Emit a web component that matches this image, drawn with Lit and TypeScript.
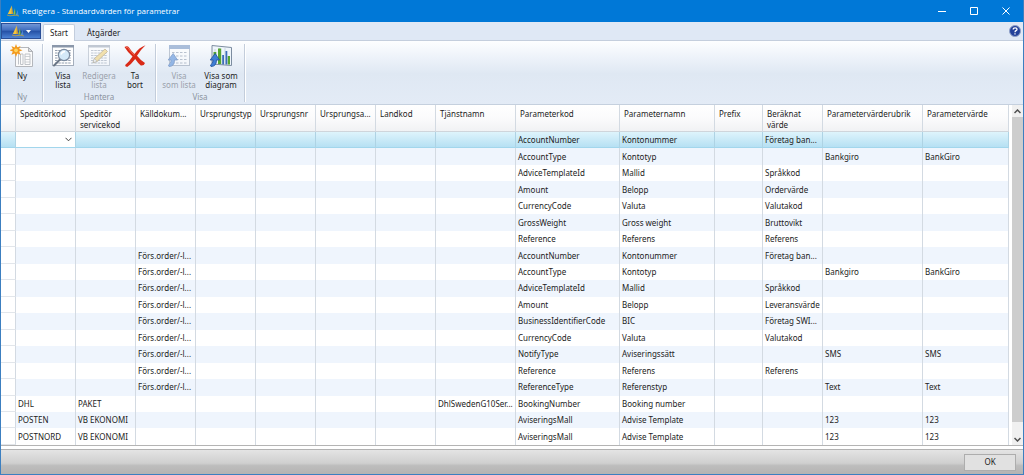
import { LitElement, html, css, svg } from 'lit';
import { customElement, state } from 'lit/decorators.js';
import { classMap } from 'lit/directives/class-map.js';

interface Column {
  key: string;
  title: string;
  width: number;
}

type Row = Record<string, string>;

const columns: Column[] = [
  { key: 'agent', title: 'Speditörkod', width: 60 },
  { key: 'service', title: 'Speditör servicekod', width: 60 },
  { key: 'source', title: 'Källdokum...', width: 60 },
  { key: 'originType', title: 'Ursprungstyp', width: 60 },
  { key: 'originNo', title: 'Ursprungsnr', width: 60 },
  { key: 'originAddress', title: 'Ursprungsa...', width: 60 },
  { key: 'country', title: 'Landkod', width: 60 },
  { key: 'serviceName', title: 'Tjänstnamn', width: 80 },
  { key: 'code', title: 'Parameterkod', width: 104 },
  { key: 'name', title: 'Parameternamn', width: 95 },
  { key: 'prefix', title: 'Prefix', width: 48 },
  { key: 'computed', title: 'Beräknat värde', width: 60 },
  { key: 'heading', title: 'Parametervärderubrik', width: 100 },
  { key: 'value', title: 'Parametervärde', width: 86 },
];

const order = 'Förs.order/-l...';

const rows: Row[] = [
  { code: 'AccountNumber', name: 'Kontonummer', computed: 'Företag ban...' },
  { code: 'AccountType', name: 'Kontotyp', heading: 'Bankgiro', value: 'BankGiro' },
  { code: 'AdviceTemplateId', name: 'Mallid', computed: 'Språkkod' },
  { code: 'Amount', name: 'Belopp', computed: 'Ordervärde' },
  { code: 'CurrencyCode', name: 'Valuta', computed: 'Valutakod' },
  { code: 'GrossWeight', name: 'Gross weight', computed: 'Bruttovikt' },
  { code: 'Reference', name: 'Referens', computed: 'Referens' },
  { source: order, code: 'AccountNumber', name: 'Kontonummer', computed: 'Företag ban...' },
  { source: order, code: 'AccountType', name: 'Kontotyp', heading: 'Bankgiro', value: 'BankGiro' },
  { source: order, code: 'AdviceTemplateId', name: 'Mallid', computed: 'Språkkod' },
  { source: order, code: 'Amount', name: 'Belopp', computed: 'Leveransvärde' },
  { source: order, code: 'BusinessIdentifierCode', name: 'BIC', computed: 'Företag SWI...' },
  { source: order, code: 'CurrencyCode', name: 'Valuta', computed: 'Valutakod' },
  { source: order, code: 'NotifyType', name: 'Aviseringssätt', heading: 'SMS', value: 'SMS' },
  { source: order, code: 'Reference', name: 'Referens', computed: 'Referens' },
  { source: order, code: 'ReferenceType', name: 'Referenstyp', heading: 'Text', value: 'Text' },
  { agent: 'DHL', service: 'PAKET', serviceName: 'DhlSwedenG10Ser...', code: 'BookingNumber', name: 'Booking number' },
  { agent: 'POSTEN', service: 'VB EKONOMI', code: 'AviseringsMall', name: 'Advise Template', heading: '123', value: '123' },
  { agent: 'POSTNORD', service: 'VB EKONOMI', code: 'AviseringsMall', name: 'Advise Template', heading: '123', value: '123' },
];

const logo = html`<svg class="logo" viewBox="0 0 12 12" aria-hidden="true">
  <path d="M4.800 0.500v8.500H0.800z" fill="#f5c53a" />
  <path d="M4.800 0.500l1.400 8.500H4.800z" fill="#dd9a22" />
  <path d="M8 3v6.500H6.300z" fill="#8cc152" />
  <path d="M8 3l1 6.500h-1z" fill="#4c9440" />
  <path d="M10.600 5v5H9.300z" fill="#7db4e8" />
  <path d="M10.600 5l1 5h-1z" fill="#3b77c4" />
  <path d="M0 10q3 1.400 6 .5t6 .5" fill="none" stroke="#c9a63c" stroke-width="0.8" />
</svg>`;

const sheet = svg`
  <rect x="1.500" y="1.500" width="21" height="20" fill="#fff" stroke="#a4aebc" />
  <rect x="1" y="1" width="22" height="2.500" fill="#8a97aa" />
  <path d="M4 6.500h16M4 9h16M4 11.500h16M4 14h16M4 16.500h16M4 19h16" stroke="#8793a5" stroke-width="0.900" stroke-dasharray="2.5 .8" />`;

const arrow = svg`
  <path d="M2 22.500q5.500 0 5.500-6.500H10.500L6.200 9.500 1.200 16H4.200q0 3.500-2.700 5z" fill="#3f7fd6" stroke="#1d4f9c" stroke-width="0.8" />`;

const icons = {
  create: html`<svg class="icon" viewBox="0 0 24 24" aria-hidden="true">
    <path d="M5.500 3.500h13l4 4v15h-17z" fill="#fbfbfb" stroke="#b4b7bc" />
    <path d="M18.500 3.500v4h4z" fill="#dcdfe3" stroke="#a3a6ab" stroke-width="0.800" />
    <path d="M8.500 10v10.500M10.500 10h2.500v10.500h-2.500zM15 10h5v10.500h-5z" fill="none" stroke="#b9bdc3" stroke-width="0.900" />
    <path d="M15 12.500h5M15 15.500h5M15 18h5" stroke="#c4c8cc" stroke-width="0.800" />
    <path d="M6 0l1.300 3.400L10.600 2 9.200 5l3.300 1.300-3.300 1.300 1.400 3.200-3.300-1.400L6 13 4.700 9.400l-3.300 1.400L2.800 7.600-.5 6.300 2.800 5 1.400 2l3.300 1.400z" fill="#f39a1d" />
    <circle cx="6" cy="6.300" r="1.900" fill="#ffd45c" />
  </svg>`,
  view: html`<svg class="icon" viewBox="0 0 24 24" aria-hidden="true">
    ${sheet}
    <path d="M9 15.500l-6 6" stroke="#6a7686" stroke-width="2" stroke-linecap="round" />
    <circle cx="13" cy="11" r="5.600" fill="#d4e9f8" stroke="#7b8ba0" stroke-width="1.200" />
    <path d="M10 10.500q1-3 4-3" fill="none" stroke="#fff" stroke-width="1.300" />
  </svg>`,
  edit: html`<svg class="icon" viewBox="0 0 24 24" aria-hidden="true">
    ${sheet}
    <path d="M6 18.500l1.500-4L18 5l2.500 2.500L10 17.500z" fill="#f2cd63" stroke="#94793c" stroke-width="0.800" />
    <path d="M6 18.500l1.500-4 2.500 3z" fill="#fff" stroke="#6f6b60" stroke-width="0.600" />
  </svg>`,
  remove: html`<svg class="icon" viewBox="0 0 24 24" aria-hidden="true">
    <path d="M1.500 3q3-1.500 4.500.5 2.500 4 5.500 6.500Q16 3.500 22.500 1.200q-5.500 5-8.500 10.600 3.500 4.500 8 7.200-1 3-4.200 2.500-3-2.500-5.600-6.500Q8.500 20 4.200 23q-2.500-.5-2-2 4.300-3.500 7.300-8.500Q4.500 8 1.500 3z" fill="#d92a17" />
    <path d="M3 3.300q1.500-.3 2.500 1.200 3 4.500 6 6.500" fill="none" stroke="#f2745f" stroke-width="1" />
  </svg>`,
  list: html`<svg class="icon" viewBox="0 0 24 24" aria-hidden="true">
    <rect x="2.500" y="1.500" width="20" height="20" fill="#fff" stroke="#8b98ab" />
    <rect x="2" y="1" width="21" height="4" fill="#5f83b8" />
    <path d="M5 8.500h15M5 12h15M5 15.500h15M5 19h15" stroke="#8290a4" stroke-width="1.200" stroke-dasharray="2.500 1.500" />
    ${arrow}
  </svg>`,
  chart: html`<svg class="icon" viewBox="0 0 24 24" aria-hidden="true">
    <path d="M3 1.500l19.500 2v18L3 20z" fill="#eef5fb" stroke="#7c8ca0" />
    <path d="M6 5v14M10.500 4v16M16 4v16" stroke="#b9cad9" stroke-width="0.700" />
    <path d="M4.500 8h2.800v6H4.500zM9 4.500h3.200v15.500H9zM18.700 12h2.300v8.500h-2.300z" fill="#55a532" />
    <path d="M13.200 11h1.800v9.500h-1.800zM16.500 7h1.800v13.500h-1.800z" fill="#3c6db9" />
    ${arrow}
  </svg>`,
};

@customElement('app-root')
export class AppRoot extends LitElement {
  @state() private tab = 'Start';
  @state() private selected = 0;

  static styles = css`
    :host {
      display: block;
      height: 100vh;
      font: 8px/10px 'Noto Sans', 'Open Sans', sans-serif;
      color: #1c1c1c;
    }
    * {
      box-sizing: border-box;
    }
    button,
    select {
      font: inherit;
      color: inherit;
      margin: 0;
      padding: 0;
      border: 0;
      background: none;
    }
    .window {
      display: flex;
      flex-direction: column;
      height: 100%;
      border: solid #3c7fc0;
      border-width: 0 1px 1px;
      background: #fff;
      overflow: hidden;
    }
    .titlebar {
      display: flex;
      align-items: center;
      flex: none;
      height: 22px;
      padding-left: 7px;
      gap: 3px;
      color: #fff;
      background: #0078d7;
      margin: 0 -1px;
    }
    .logo {
      width: 12px;
      height: 12px;
      flex: none;
    }
    .caption {
      flex: 1;
      margin: 0;
      font: 400 8px/10px 'Open Sans', sans-serif;
      white-space: nowrap;
    }
    .controls {
      display: flex;
      padding-right: 2px;
    }
    .control {
      display: grid;
      place-items: center;
      width: 32px;
      height: 22px;
    }
    .control svg {
      width: 8px;
      height: 8px;
      fill: none;
      stroke: #fff;
    }
    .tabs {
      display: flex;
      align-items: flex-end;
      flex: none;
      height: 19px;
      padding-right: 2px;
      background: #dfe8f5;
      border-bottom: 1px solid #c4cedd;
    }
    .app-menu {
      display: flex;
      align-items: center;
      justify-content: center;
      gap: 2px;
      width: 40px;
      height: 16px;
      margin-bottom: 1px;
      border: 1px solid #2a4f97;
      background: linear-gradient(#7096d6, #3f6cbd 45%, #2450a4 50%, #4c82d4);
    }
    .app-menu .caret {
      width: 5px;
      height: 3px;
      fill: #fff;
    }
    .tab {
      height: 17px;
      padding: 0 6px;
      margin-left: 2px;
      margin-bottom: -1px;
      border: 1px solid transparent;
      border-bottom: 0;
    }
    .tab + .tab {
      margin-left: 5px;
    }
    .tab.active {
      background: #fff;
      border-color: #c4cedd;
      border-radius: 2px 2px 0 0;
    }
    .help {
      width: 12px;
      height: 12px;
      margin: 0 0 3px auto;
    }
    .help svg {
      display: block;
      width: 12px;
      height: 12px;
    }
    .ribbon {
      display: flex;
      flex: none;
      height: 64px;
      padding: 3px 0 2px 1px;
      background: linear-gradient(#fdfeff, #eef3fa 25%, #dfe8f3 52%, #e3ebf6);
      border-bottom: 1px solid #c5d0de;
    }
    .group {
      display: flex;
      flex-direction: column;
      justify-content: space-between;
      padding: 0 2px;
      border-right: 1px solid #c3cddb;
      box-shadow: 1px 0 #fff;
    }
    .actions {
      display: flex;
    }
    .action {
      display: flex;
      flex-direction: column;
      align-items: center;
      justify-content: flex-start;
      width: 36px;
      line-height: 9px;
      white-space: pre;
    }
    .action.wide {
      width: 42px;
    }
    .action:disabled {
      color: #9aa1ab;
    }
    .action:disabled .icon {
      opacity: 0.5;
    }
    .icon {
      width: 24px;
      height: 24px;
      margin-bottom: 3px;
    }
    .group-name {
      text-align: center;
      line-height: 10px;
      color: #8c949f;
    }
    .content {
      display: flex;
      flex: 1;
      min-height: 0;
      border-bottom: 1px solid #b4b4b4;
    }
    .table-area {
      flex: 1;
      min-width: 0;
    }
    .grid {
      width: 100%;
      height: 100%;
      table-layout: fixed;
      border-collapse: separate;
      border-spacing: 0;
    }
    th,
    td {
      height: 16px;
      padding: 0 0 0 2px;
      text-align: left;
      font-weight: 400;
      border-right: 1px solid #d3dae2;
      overflow: hidden;
      white-space: nowrap;
      text-overflow: ellipsis;
    }
    th {
      height: 27px;
      padding: 3px 0 0 4px;
      line-height: 11px;
      vertical-align: top;
      background: linear-gradient(#fff, #fbfbfc 50%, #f1f2f4);
      border-bottom: 1px solid #cfd5db;
    }
    th.wrap {
      padding-right: 8px;
      white-space: normal;
    }
    tbody tr:nth-child(even) td {
      background: #eff5fd;
    }
    tbody .gutter {
      border-bottom: 1px solid #e2e6eb;
    }
    tbody tr:nth-child(even) td.gutter {
      background: #fff;
    }
    tbody tr.current td,
    tbody tr.current td.gutter {
      background: linear-gradient(#def4fc, #b6e0f3);
      border-bottom: 1px solid #a2d6ec;
      border-right-color: #aed3e4;
    }
    tbody tr.current td.editor {
      padding: 0;
      background: #fff;
    }
    .picker {
      display: block;
      width: 100%;
      height: 15px;
      padding: 0 14px 0 3px;
      appearance: none;
      outline: 0;
      background: url("data:image/svg+xml,%3Csvg xmlns='http://www.w3.org/2000/svg' viewBox='0 0 7 5'%3E%3Cpath d='M.5.8l3 3 3-3' fill='none' stroke='%23444'/%3E%3C/svg%3E")
        right 3px center / 7px 5px no-repeat;
    }
    .scrollbar {
      display: flex;
      flex-direction: column;
      flex: none;
      width: 14px;
      padding-left: 3px;
    }
    .step {
      display: grid;
      place-items: center;
      height: 12px;
      background: #f0f0f0;
    }
    .step svg {
      width: 7px;
      height: 5px;
      fill: none;
      stroke: #505050;
      stroke-width: 1.5;
    }
    .track {
      flex: 1;
      padding-bottom: 11px;
      background: #f0f0f0;
    }
    .thumb {
      height: 100%;
      background: #cdcdcd;
    }
    .footer {
      display: flex;
      align-items: center;
      justify-content: flex-end;
      flex: none;
      height: 25px;
      margin-top: 3px;
      padding-right: 7px;
      border-top: 1px solid #b2b2b2;
      background: linear-gradient(#e4e4e4, #cfcfcf 55%, #bdbdbd 65%, #b5b3b2);
    }
    .ok {
      width: 52px;
      height: 17px;
      border: 1px solid #adadad;
      background: #e1e1e1;
    }
  `;

  private action(icon: unknown, label: string, disabled = false, wide = false) {
    return html`<button class=${classMap({ action: true, wide })} ?disabled=${disabled}>${icon}<span>${label}</span></button>`;
  }

  private group(name: string, actions: unknown) {
    return html`<div class="group" role="group" aria-label=${name}>
      <div class="actions">${actions}</div>
      <div class="group-name">${name}</div>
    </div>`;
  }

  private cell(row: Row, column: Column, index: number) {
    if (index === this.selected && column.key === 'agent') {
      return html`<td class="editor">
        <select class="picker" aria-label=${column.title}>
          <option selected>${row.agent ?? ''}</option>
          <option>DHL</option>
          <option>POSTEN</option>
          <option>POSTNORD</option>
        </select>
      </td>`;
    }
    return html`<td>${row[column.key] ?? ''}</td>`;
  }

  render() {
    return html`<div class="window">
      <header class="titlebar">
        ${logo}
        <h1 class="caption">Redigera - Standardvärden för parametrar</h1>
        <div class="controls">
          <button class="control" aria-label="Minimera"><svg viewBox="0 0 8 8"><path d="M0 4.500h8" /></svg></button>
          <button class="control" aria-label="Maximera"><svg viewBox="0 0 8 8"><path d="M.5.5h7v7h-7z" /></svg></button>
          <button class="control" aria-label="Stäng"><svg viewBox="0 0 8 8"><path d="M.5.5l7 7M7.500.5l-7 7" /></svg></button>
        </div>
      </header>
      <nav class="tabs">
        <button class="app-menu" aria-label="Programmeny">
          ${logo}<svg class="caret" viewBox="0 0 5 3"><path d="M0 0h5L2.500 3z" /></svg>
        </button>
        ${['Start', 'Åtgärder'].map(
          (name) => html`<button
            class=${classMap({ tab: true, active: this.tab === name })}
            @click=${() => (this.tab = name)}
          >${name}</button>`,
        )}
        <button class="help" aria-label="Hjälp">
          <svg viewBox="0 0 12 12">
            <circle cx="6" cy="6" r="5.500" fill="#23419a" stroke="#8fa0c8" />
            <path d="M4.200 4.600q0-1.800 1.900-1.800t1.900 1.500q0 .9-1 1.400t-1 1.500M6 8.200v1.400" fill="none" stroke="#fff" stroke-width="1.300" />
          </svg>
        </button>
      </nav>
      <section class="ribbon">
        ${this.group('Ny', this.action(icons.create, 'Ny'))}
        ${this.group('Hantera', [
          this.action(icons.view, 'Visa\nlista'),
          this.action(icons.edit, 'Redigera\nlista', true),
          this.action(icons.remove, 'Ta\nbort'),
        ])}
        ${this.group('Visa', [
          this.action(icons.list, 'Visa\nsom lista', true, true),
          this.action(icons.chart, 'Visa som\ndiagram', false, true),
        ])}
      </section>
      <main class="content">
        <div class="table-area">
          <table class="grid">
            <colgroup>
              <col style="width:15px" />
              ${columns.map((c) => html`<col style="width:${c.width}px" />`)}
            </colgroup>
            <thead>
              <tr>
                <th class="gutter"></th>
                ${columns.map(
                  (c) => html`<th class=${classMap({ wrap: c.title.includes(' ') })} scope="col">${c.title}</th>`,
                )}
              </tr>
            </thead>
            <tbody>
              ${rows.map(
                (row, i) => html`<tr class=${classMap({ current: i === this.selected })} @click=${() => (this.selected = i)}>
                  <td class="gutter"></td>
                  ${columns.map((c) => this.cell(row, c, i))}
                </tr>`,
              )}
            </tbody>
          </table>
        </div>
        <div class="scrollbar">
          <button class="step" aria-label="Upp"><svg viewBox="0 0 7 5"><path d="M.5 4l3-3 3 3" /></svg></button>
          <div class="track"><div class="thumb"></div></div>
          <button class="step" aria-label="Ned"><svg viewBox="0 0 7 5"><path d="M.5 1l3 3 3-3" /></svg></button>
        </div>
      </main>
      <footer class="footer"><button class="ok">OK</button></footer>
    </div>`;
  }
}
